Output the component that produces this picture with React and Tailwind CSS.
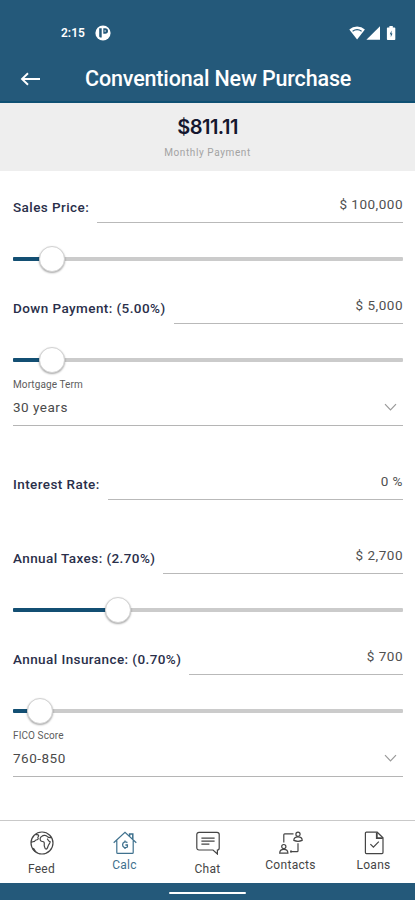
import { useState } from 'react';

const StatusBar = () => (
  <div className="flex h-[56px] items-center pt-[9px] pl-[61px] pr-[18px] text-white">
    <span className="w-[25px] text-[12px] leading-none font-semibold">2:15</span>
    <svg className="ml-[9px]" width="16" height="16" viewBox="0 0 16 16">
      <circle cx="8" cy="8" r="7.6" fill="#fff" />
      <path d="M4.2 3.2h2.5v9.4H5.4a5 5 0 0 1-1.2-1.2zM8.3 3.2h1.9a2.8 2.8 0 0 1 0 5.6H8.3z" fill="#24597a" />
      <path d="M9.6 5.2h1v1.6h-1z" fill="#fff" />
    </svg>
    <svg className="ml-auto" width="48" height="16" viewBox="0 0 48 16" fill="#fff">
      <path d="M.3 4.6a11.6 11.6 0 0 1 15.6 0L8.1 14.4z" />
      <path d="M3.6 6.2c2.8-1.9 6.2-1.9 9 0" fill="none" stroke="#24597a" strokeWidth="1.1" />
      <path d="M31 1.2v13.6H17.4z" />
      <path d="M40.4 1h3.4v1.5h1.7c.5 0 .8.3.8.8v10.9c0 .5-.3.8-.8.8h-6.8c-.5 0-.8-.3-.8-.8V3.3c0-.5.3-.8.8-.8h1.7z" />
      <path d="M42.5 5.6l-1.7 3.6h1v3l1.7-3.7h-1z" fill="#24597a" />
    </svg>
  </div>
);

const Header = () => (
  <header className="h-[103px] border-b-2 border-[#0e5073] bg-[#24597a]">
    <StatusBar />
    <div className="flex h-[45px] items-center pl-[20px] text-white">
      <button className="w-[65px]" aria-label="Back">
        <svg width="21" height="14" viewBox="0 0 21 14" fill="none" stroke="#fff" strokeWidth="1.9">
          <path d="M20 7H2M8 1.2L2 7l6 5.8" />
        </svg>
      </button>
      <h1 className="pt-px text-[21.5px] leading-none font-medium tracking-[-0.15px] whitespace-nowrap">Conventional New Purchase</h1>
    </div>
  </header>
);

const Field = ({ label, value, className }) => (
  <div className={`flex h-[29px] gap-[8px] ${className}`}>
    <label className="pt-[5px] text-[13.5px] leading-[16px] font-medium tracking-[0.42px] whitespace-nowrap text-[#2a2f4a]">
      {label}
    </label>
    <div className="flex-1 border-b border-[#b9b9b9] pt-[2px] text-right text-[13.5px] leading-[16px] tracking-[0.5px] text-[#505050]">
      {value}
    </div>
  </div>
);

const Slider = ({ initial }) => {
  const [value, setValue] = useState(initial);

  return (
    <div className="relative mt-[23px] flex h-[26px] items-center">
      <div className="h-[4px] w-full overflow-hidden rounded-[1px] bg-[#cbcbcb]">
        <div className="h-full bg-[#134f73]" style={{ width: `${value}%` }} />
      </div>
      <div
        className="absolute top-0 h-[26px] w-[26px] -translate-x-1/2 rounded-full border border-[#d2d2d2] bg-white shadow-[0_1px_2px_rgba(0,0,0,0.35)]"
        style={{ left: `${value}%` }}
      />
      <input
        type="range"
        min="0"
        max="100"
        step="0.1"
        value={value}
        onChange={(e) => setValue(Number(e.target.value))}
        className="absolute inset-0 w-full cursor-pointer opacity-0"
      />
    </div>
  );
};

const SelectField = ({ label, value }) => (
  <div className="mt-[4px]">
    <div className="h-[15px] text-[10px] leading-[15px] tracking-[0.1px] text-[#5c5c5c]">{label}</div>
    <div className="flex h-[34px] justify-between border-b border-[#b5b5b5] pr-[6px]">
      <span className="pt-[7px] text-[13.5px] leading-[16px] tracking-[0.5px] text-[#4a4a4a]">{value}</span>
      <svg className="mt-[11px]" width="13" height="9" viewBox="0 0 13 9" fill="none" stroke="#9a9a9a" strokeWidth="1.2">
        <path d="M1 1.2l5.5 5.6L12 1.2" />
      </svg>
    </div>
  </div>
);

const FeedIcon = () => (
  <>
    <circle cx="12" cy="12" r="11" />
    <path d="M5.5 3.2C6.5 4 8 3.4 8.6 4.4c.5 1-1.4 1.4-.6 2.6.8 1-.6 2-1.8 2C4.6 9 5 11 3.6 10.6 2.6 10.2 2 11 1.4 12" />
    <path d="M12 5.2c1.6-1.4 4.2-.8 5.4.4 1 1.2 2.6 1 3.6 1M12 5.2c-2 .8-2.4 3.4-1.2 4.6 1 1 2.4.4 3.2 1.4.8 1.4-.2 2.6.4 4.2.4 1.6 1 3 1.8 2.8 1.4-.4 1.4-2 2-3.4.6-1.6 1.8-2.2 2-4-1.4 0-2-1.8-3-3.2" />
    <path d="M3 17.6c1.2.4 1.2 2 2.4 2.6" strokeWidth="1.8" />
  </>
);

const CalcIcon = () => (
  <>
    <path d="M.7 11.8L12 1.2l11.3 10.6M3.8 9.4v12.1c0 .6.3.9.9.9h14.6c.6 0 .9-.3.9-.9V9.4" />
    <path d="M16.6 5.2V3h3.2v5" strokeWidth="1.5" />
    <path d="M14.4 11.6c-2-1.4-4.8-.4-4.8 2.2 0 2.6 2.6 3.6 4.8 2.2v-2h-2M12 9.6v1.6M12 16.6v1.4" strokeWidth="1.3" />
  </>
);

const ChatIcon = () => (
  <>
    <path d="M3 1.4h18c1.3 0 2.2.9 2.2 2.2V17c0 1.3-.6 2-1.8 2v4l-4.4-4H3c-1.3 0-2.2-.9-2.2-2.2V3.6c0-1.3.9-2.2 2.2-2.2z" />
    <path d="M5.4 7.2h13.2M5.4 10.2h13.2M5.4 13.2h8" />
  </>
);

const ContactsIcon = () => (
  <>
    <circle cx="19" cy="3.2" r="2.1" />
    <path d="M14.8 9.4c0-2.4 1.6-3.6 4.2-3.6s4.2 1.2 4.2 3.6c-2.4 1-6 1-8.4 0z" />
    <circle cx="4.8" cy="15.6" r="2.1" />
    <path d="M.7 22.2c0-2.6 1.5-3.8 4.1-3.8s4.1 1.2 4.1 3.8z" />
    <path d="M4.8 11.4V3.8c0-.6.3-.9.9-.9h8.8M12.8 3.6v-1M19 12.2v7.6c0 .6-.3.9-.9.9h-7M12 19.2v2.6" />
  </>
);

const LoansIcon = () => (
  <>
    <path d="M4.4 1.2h10.8l5.8 5.6v14.8c0 .6-.4 1-1 1H4.4c-.6 0-1-.4-1-1V2.2c0-.6.4-1 1-1z" />
    <path d="M14.8 1.4v5.8h6" strokeWidth="1.8" />
    <path d="M8.4 13.2l3 3 5.4-5.6" />
  </>
);

const TABS = [
  { name: 'Feed', icon: FeedIcon, low: true },
  { name: 'Calc', icon: CalcIcon, active: true },
  { name: 'Chat', icon: ChatIcon, low: true },
  { name: 'Contacts', icon: ContactsIcon },
  { name: 'Loans', icon: LoansIcon },
];

const TabBar = () => (
  <nav className="grid h-[63px] grid-cols-5 border-t border-[#c9c9c9] bg-white">
    {TABS.map(({ name, icon: Icon, active, low }) => (
      <button
        key={name}
        className={`flex flex-col items-center pt-[10px] ${active ? 'text-[#3f718e]' : 'text-[#454545]'}`}
      >
        <svg width="24" height="24" viewBox="0 0 24 24" fill="none" stroke="currentColor" strokeWidth="1.2">
          <Icon />
        </svg>
        <span className={`text-[12px] leading-[14px] tracking-[0.3px] ${low ? 'mt-[7px]' : 'mt-[3px]'}`}>{name}</span>
      </button>
    ))}
  </nav>
);

const App = () => {
  return (
    <div className="flex h-[900px] w-[415px] flex-col overflow-hidden bg-white font-['Roboto',sans-serif]">
      <Header />

      {/* Monthly payment summary */}
      <section className="flex h-[68px] flex-col items-center bg-[#eeeeee] pt-[13px]">
        <div className="font-['Inter',sans-serif] text-[20px] leading-[22px] font-semibold tracking-[-0.5px] text-[#14172f]">
          $811.11
        </div>
        <div className="mt-[8px] text-[10px] leading-[14px] tracking-[0.6px] text-[#a3a3a3]">Monthly Payment</div>
      </section>

      <main className="flex-1 pr-[12px] pl-[13px]">
        <Field label="Sales Price:" value="$ 100,000" className="mt-[23px]" />
        <Slider initial={10.1} />
        <Field label="Down Payment: (5.00%)" value="$ 5,000" className="mt-[23px]" />
        <Slider initial={10.1} />
        <SelectField label="Mortgage Term" value="30 years" />

        <Field label="Interest Rate:" value="0 %" className="mt-[45px]" />
        <Field label="Annual Taxes: (2.70%)" value="$ 2,700" className="mt-[45px]" />
        <Slider initial={27} />
        <Field label="Annual Insurance: (0.70%)" value="$ 700" className="mt-[23px]" />
        <Slider initial={7} />
        <SelectField label="FICO Score" value="760-850" />
      </main>

      <TabBar />
      <footer className="flex h-[17px] justify-center bg-[#24597a] pt-[9px]">
        <div className="h-[2px] w-[77px] rounded-full bg-white" />
      </footer>
    </div>
  );
};

export default App;
